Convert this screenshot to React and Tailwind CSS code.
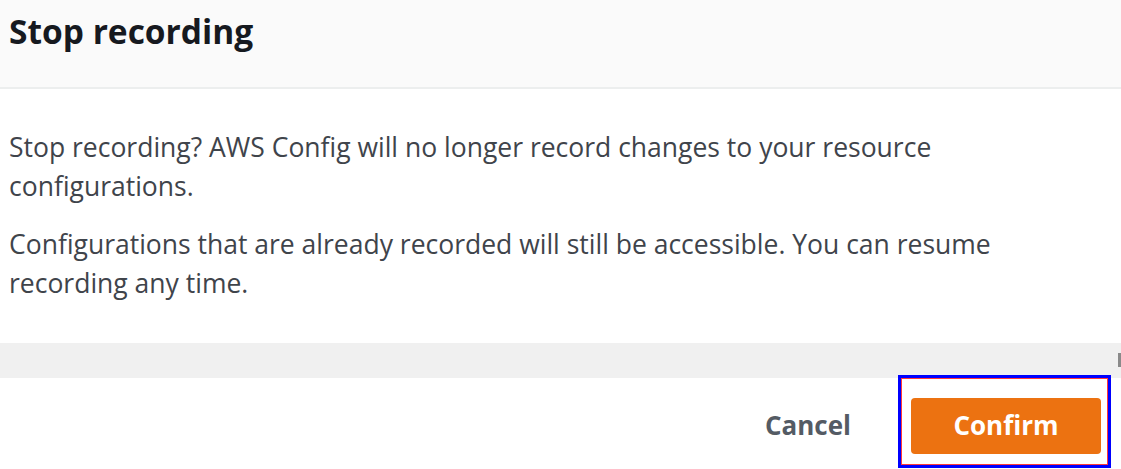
export default function App() {
  return (
    <div className="relative w-[1121px] h-[469px] overflow-hidden bg-white font-['Open_Sans',sans-serif]">
      <div className="h-[89px] bg-[#fafafa] border-b-2 border-[#eceeee] px-[9px] pt-[10px]">
        <h1 className="text-[33.5px] leading-[42px] font-bold text-[#16191f]">Stop recording</h1>
      </div>
      <div className="h-[254px] px-[9px] pt-[39px] text-[26.5px] leading-[39px] text-[#3f444b]">
        <p>Stop recording? AWS Config will no longer record changes to your resource<br />configurations.</p>
        <p className="mt-[19px]">Configurations that are already recorded will still be accessible. You can resume<br />recording any time.</p>
      </div>
      <div className="h-[35px] bg-[#f0f0f0]" />
      <div className="h-[91px] flex items-center justify-end pr-[20px] pt-[4px]">
        <button className="mr-[60px] text-[26px] font-bold text-[#545b64]">Cancel</button>
        <button className="w-[190px] h-[56px] rounded-[4px] bg-[#ec7211] text-[26px] font-bold text-white">Confirm</button>
      </div>
      <div className="absolute left-[898px] top-[375px] w-[213px] h-[93px] border-[3px] border-[#0000ff]">
        <div className="w-full h-full border border-[#ff3b3b]" />
      </div>
      <div className="absolute left-[1118px] top-[353px] w-[3px] h-[14px] bg-[#8a8a8a]" />
    </div>
  );
}
